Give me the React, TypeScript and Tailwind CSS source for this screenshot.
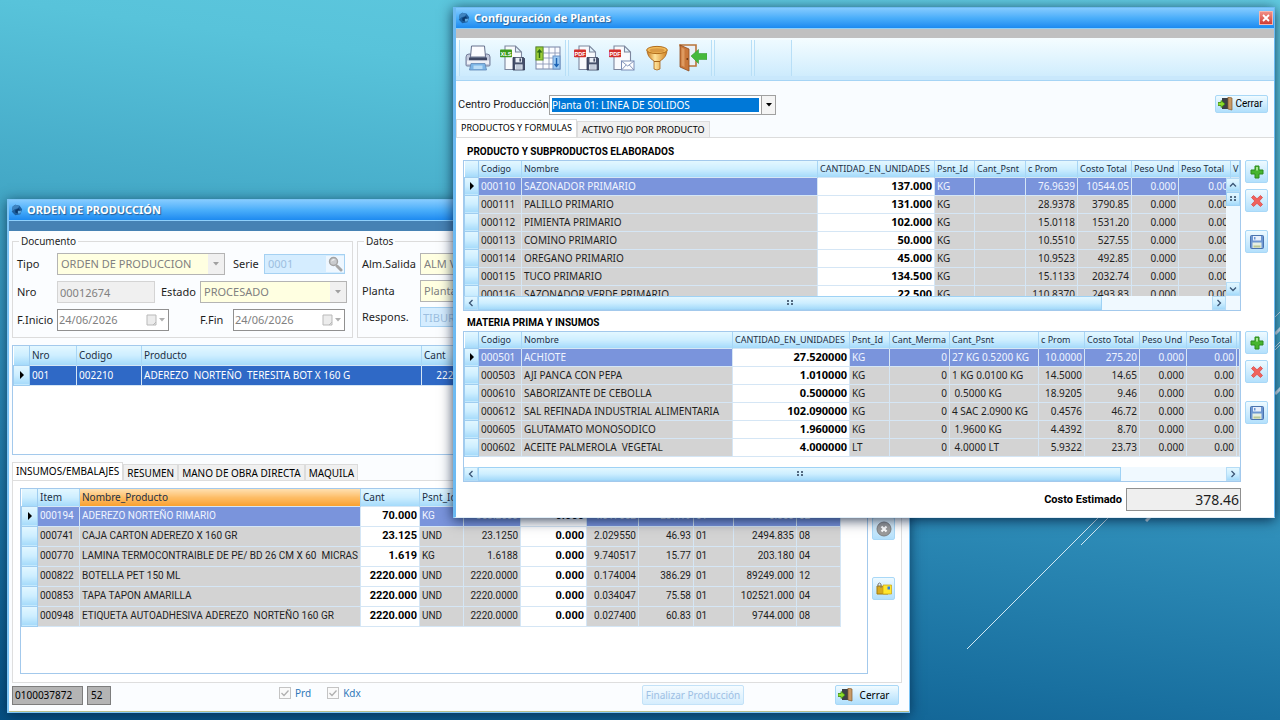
import React, { useState } from 'react';
import clsx from 'clsx';

type Column = {
  title: string;
  width?: string;
  right?: boolean;
  editable?: boolean;
  sorted?: boolean;
};

const font = 'font-["Noto_Sans","Liberation_Sans",sans-serif]';
const narrowFont = 'font-["Roboto","Noto_Sans",sans-serif]';
const glossy = 'bg-linear-to-b from-[#e3f7ff] via-[#cdeeff] to-[#a4dafa]';

const productColumns: Column[] = [
  { title: 'Codigo', width: 'w-[43px]' },
  { title: 'Nombre' },
  { title: 'CANTIDAD_EN_UNIDADES', width: 'w-[117px]', right: true, editable: true },
  { title: 'Psnt_Id', width: 'w-[40px]' },
  { title: 'Cant_Psnt', width: 'w-[51px]' },
  { title: 'c Prom', width: 'w-[52px]', right: true },
  { title: 'Costo Total', width: 'w-[54px]', right: true },
  { title: 'Peso Und', width: 'w-[47px]', right: true },
  { title: 'Peso Total', width: 'w-[52px]', right: true },
  { title: 'V', width: 'w-[9px]' },
];

const productRows = [
  ['000110', 'SAZONADOR PRIMARIO', '137.000', 'KG', '', '76.9639', '10544.05', '0.000', '0.00', ''],
  ['000111', 'PALILLO PRIMARIO', '131.000', 'KG', '', '28.9378', '3790.85', '0.000', '0.00', ''],
  ['000112', 'PIMIENTA PRIMARIO', '102.000', 'KG', '', '15.0118', '1531.20', '0.000', '0.00', ''],
  ['000113', 'COMINO PRIMARIO', '50.000', 'KG', '', '10.5510', '527.55', '0.000', '0.00', ''],
  ['000114', 'OREGANO PRIMARIO', '45.000', 'KG', '', '10.9523', '492.85', '0.000', '0.00', ''],
  ['000115', 'TUCO PRIMARIO', '134.500', 'KG', '', '15.1133', '2032.74', '0.000', '0.00', ''],
  ['000116', 'SAZONADOR VERDE PRIMARIO', '22.500', 'KG', '', '110.8370', '2493.83', '0.000', '0.00', ''],
];

const materialColumns: Column[] = [
  { title: 'Codigo', width: 'w-[43px]' },
  { title: 'Nombre' },
  { title: 'CANTIDAD_EN_UNIDADES', width: 'w-[117px]', right: true, editable: true },
  { title: 'Psnt_Id', width: 'w-[40px]' },
  { title: 'Cant_Merma', width: 'w-[60px]', right: true },
  { title: 'Cant_Psnt', width: 'w-[89px]' },
  { title: 'c Prom', width: 'w-[46px]', right: true },
  { title: 'Costo Total', width: 'w-[55px]', right: true },
  { title: 'Peso Und', width: 'w-[47px]', right: true },
  { title: 'Peso Total', width: 'w-[50px]', right: true },
  { title: '', width: 'w-[3px]' },
];

const materialRows = [
  ['000501', 'ACHIOTE', '27.520000', 'KG', '0', '27 KG 0.5200 KG', '10.0000', '275.20', '0.000', '0.00', ''],
  ['000503', 'AJI PANCA CON PEPA', '1.010000', 'KG', '0', '1 KG 0.0100 KG', '14.5000', '14.65', '0.000', '0.00', ''],
  ['000610', 'SABORIZANTE DE CEBOLLA', '0.500000', 'KG', '0', ' 0.5000 KG', '18.9205', '9.46', '0.000', '0.00', ''],
  ['000612', 'SAL REFINADA INDUSTRIAL ALIMENTARIA', '102.090000', 'KG', '0', '4 SAC 2.0900 KG', '0.4576', '46.72', '0.000', '0.00', ''],
  ['000605', 'GLUTAMATO MONOSODICO', '1.960000', 'KG', '0', ' 1.9600 KG', '4.4392', '8.70', '0.000', '0.00', ''],
  ['000602', 'ACEITE PALMEROLA  VEGETAL', '4.000000', 'LT', '0', ' 4.0000 LT', '5.9322', '23.73', '0.000', '0.00', ''],
];

const orderColumns: Column[] = [
  { title: 'Nro', width: 'w-[47px]' },
  { title: 'Codigo', width: 'w-[65px]' },
  { title: 'Producto', width: 'w-[280px]' },
  { title: 'Cant', width: 'w-[60px]', right: true },
  { title: '' },
];

const orderRows = [['001', '002210', 'ADEREZO  NORTEÑO  TERESITA BOT X 160 G', '2220.000', '']];

const supplyColumns: Column[] = [
  { title: 'Item', width: 'w-[42px]' },
  { title: 'Nombre_Producto', sorted: true },
  { title: 'Cant', width: 'w-[59px]', right: true, editable: true },
  { title: 'Psnt_Id', width: 'w-[44px]' },
  { title: 'Cant_Psnt', width: 'w-[57px]', right: true },
  { title: 'Merma', width: 'w-[66px]', right: true, editable: true },
  { title: 'c Prom', width: 'w-[52px]', right: true },
  { title: 'Costo', width: 'w-[55px]', right: true },
  { title: 'Alm', width: 'w-[40px]' },
  { title: 'Stock', width: 'w-[63px]', right: true },
  { title: 'Lin', width: 'w-[44px]' },
];

const supplyRows = [
  ['000194', 'ADEREZO NORTEÑO RIMARIO', '70.000', 'KG', '353.2500', '0.000', '4.017052', '281.19', '01', '0.360', '02'],
  ['000741', 'CAJA CARTON ADEREZO X 160 GR', '23.125', 'UND', '23.1250', '0.000', '2.029550', '46.93', '01', '2494.835', '08'],
  ['000770', 'LAMINA TERMOCONTRAIBLE DE PE/ BD 26 CM X 60  MICRAS', '1.619', 'KG', '1.6188', '0.000', '9.740517', '15.77', '01', '203.180', '04'],
  ['000822', 'BOTELLA PET 150 ML', '2220.000', 'UND', '2220.0000', '0.000', '0.174004', '386.29', '01', '89249.000', '12'],
  ['000853', 'TAPA TAPON AMARILLA', '2220.000', 'UND', '2220.0000', '0.000', '0.034047', '75.58', '01', '102521.000', '04'],
  ['000948', 'ETIQUETA AUTOADHESIVA ADEREZO  NORTEÑO 160 GR', '2220.000', 'UND', '2220.0000', '0.000', '0.027400', '60.83', '01', '9744.000', '08'],
];

/* ---------- icons ---------- */

const HexLogo = () => (
  <svg viewBox="0 0 14 14" className="h-3 w-3 shrink-0">
    <path d="M5 1 L10 2 L13 6 L11 12 L5 13 L1 9 L2 3Z" fill="#1c5f9f" />
    <path d="M5 1 L10 2 L8 5 L4 6 L1 9 L2 3Z" fill="#3f84c0" />
    <path d="M5 7 L9 5 L11 8 L8 11 L5 10Z" fill="#0b3a6e" />
    <path d="M8 8 L12 8 L11 11 L8 11Z" fill="#5fa9e0" />
  </svg>
);

const Diskette = () => (
  <g>
    <path d="M13 12.5h10.5l1 1V25H13z" fill="#46506b" stroke="#2e3650" strokeWidth=".8" />
    <rect x="15.5" y="12.8" width="6.5" height="4.6" fill="#e9edf5" />
    <rect x="19.4" y="13.4" width="1.7" height="3.2" fill="#46506b" />
    <rect x="15" y="19.4" width="7.6" height="5.2" fill="#dfe6f0" />
    <path d="M16 21h5.6M16 23h5.6" stroke="#9aa6bd" strokeWidth=".8" />
  </g>
);

const Sheet = () => (
  <path d="M5 1h10.5l6 6v17.5H5z M15.5 1v6h6" fill="#f8fafd" stroke="#7d879e" strokeWidth="1.1" />
);

const FileTag = ({ label, color }: { label: string; color: string }) => (
  <g>
    <rect x="0" y="4.6" width="12" height="7.6" rx=".8" fill={color} />
    <text x="6" y="10.6" textAnchor="middle" fontSize="5.6" fontWeight="bold" fill="#fff" fontFamily="Liberation Sans, sans-serif">
      {label}
    </text>
  </g>
);

const PrinterIcon = () => (
  <svg viewBox="0 0 26 26" className="h-[26px] w-[26px]">
    <path d="M6.5 1h13l1 11h-15z" fill="#fbfcff" stroke="#66708c" />
    <path d="M1 12q0-3 3-3h1.5v4h15V9H22q3 0 3 3v8q0 1-1 1H2q-1 0-1-1z" fill="#c2c9dc" stroke="#6a7391" strokeWidth=".9" />
    <path d="M4 12.500h18v3H4z" fill="#3f4763" />
    <path d="M2 15.500h22v3.500H2z" fill="#eef0f7" />
    <path d="M6 18.500h14l1.500 6.500h-17z" fill="#7db5e6" stroke="#5f86b5" strokeWidth=".8" />
    <path d="M8.500 20.500h9v3.500h-9z" fill="#b9dcf7" />
  </svg>
);

const XlsIcon = () => (
  <svg viewBox="0 0 26 26" className="h-[26px] w-[26px]">
    <Sheet />
    <FileTag label="XLS" color="#3c9a1c" />
    <Diskette />
  </svg>
);

const PdfSaveIcon = () => (
  <svg viewBox="0 0 26 26" className="h-[26px] w-[26px]">
    <Sheet />
    <FileTag label="PDF" color="#d3302c" />
    <Diskette />
  </svg>
);

const PdfMailIcon = () => (
  <svg viewBox="0 0 26 26" className="h-[26px] w-[26px]">
    <Sheet />
    <FileTag label="PDF" color="#d3302c" />
    <rect x="12.500" y="16" width="12.500" height="9" fill="#fdfeff" stroke="#7a8db5" />
    <path d="M12.500 16l6.200 5 6.300-5M12.500 25l4.600-5M25 25l-4.600-5" fill="none" stroke="#7a8db5" strokeWidth=".9" />
  </svg>
);

const GridIcon = () => (
  <svg viewBox="0 0 26 26" className="h-[26px] w-[26px]">
    <rect x="1" y="2" width="24" height="22" fill="#fbfcff" stroke="#7784a6" />
    <path d="M8 2v22M14 2v22M20 2v22M1 8h24M1 13h24M1 19h24" stroke="#8d98b8" strokeWidth=".9" />
    <rect x="1" y="2" width="7" height="13" fill="#9bce3a" stroke="#5f9321" />
    <path d="M4.500 13V5M2.500 7.500l2-2.500 2 2.500" fill="none" stroke="#2c6a12" strokeWidth="1.400" />
    <rect x="18" y="11" width="7" height="13" fill="#9cc9f2" stroke="#6c94c8" />
    <path d="M21.500 13v8M19.500 19l2 2.500 2-2.500" fill="none" stroke="#1c62b4" strokeWidth="1.400" />
  </svg>
);

const FunnelIcon = () => (
  <svg viewBox="0 0 26 26" className="h-[26px] w-[26px]">
    <defs>
      <linearGradient id="gold" x1="0" x2="1">
        <stop offset="0" stopColor="#c9791a" />
        <stop offset=".4" stopColor="#ffe39a" />
        <stop offset="1" stopColor="#d0811f" />
      </linearGradient>
    </defs>
    <path d="M3 5q0 7 7 11v8q3 2 6 0v-8q7-4 7-11z" fill="url(#gold)" stroke="#a8651a" strokeWidth=".8" />
    <ellipse cx="13" cy="5" rx="10.300" ry="3.600" fill="#f3bb58" stroke="#b06c1c" />
    <ellipse cx="13" cy="5.400" rx="7.600" ry="2.200" fill="#d99a45" />
    <path d="M10 16.500h6" stroke="#a8651a" />
  </svg>
);

const ExitIcon = () => (
  <svg viewBox="0 0 28 28" className="h-7 w-7">
    <path d="M1 1h16v21H9z" fill="#e9f0f6" stroke="#b9743a" strokeWidth="1.600" />
    <path d="M1 1l9 4v22l-9-4z" fill="#c9773a" stroke="#8f4c1f" strokeWidth=".8" />
    <path d="M2.500 3.500l3 1.400v18l-3-1.300z" fill="#de9a60" />
    <circle cx="8.300" cy="15" r=".9" fill="#6b3512" />
    <path d="M12 12l7.500-6.500V9.500H28v6h-8.500v4z" fill="#45b93b" stroke="#3a9c33" strokeWidth=".6" />
  </svg>
);

const DoorIcon = () => (
  <svg viewBox="0 0 15 14" className="h-3.5 w-[15px] shrink-0">
    <path d="M4 1h7v11H4z" fill="#3c4147" />
    <path d="M10 0l4 1v12l-4-1z" fill="#c89a66" stroke="#85592d" strokeWidth=".7" />
    <path d="M0 5.500h3V3.500L7 7l-4 3.500V8.500H0z" fill="#8ede2a" stroke="#3f8a12" strokeWidth=".8" />
  </svg>
);

const PlusIcon = () => (
  <svg viewBox="0 0 14 14" className="h-3.5 w-3.5">
    <path d="M5 1h4v4h4v4H9v4H5V9H1V5h4z" fill="#46b52e" stroke="#2c8a1d" />
    <path d="M6 2h2v3.500H6z" fill="#a5e58f" />
  </svg>
);

const CrossIcon = () => (
  <svg viewBox="0 0 14 14" className="h-3.5 w-3.5">
    <path d="M3.500 1.500L7 4.800l3.500-3.300 2 2L9.300 7l3.200 3.500-2 2L7 9.300l-3.500 3.200-2-2L4.800 7 1.500 3.500z" fill="#f0625c" stroke="#dc4a48" strokeWidth=".8" />
  </svg>
);

const SaveIcon = () => (
  <svg viewBox="0 0 14 14" className="h-3.5 w-3.5">
    <rect x=".5" y=".5" width="13" height="13" rx="1" fill="#6d97d2" stroke="#4a73ae" />
    <rect x="3" y="1" width="8" height="4.500" fill="#e8f0fb" />
    <rect x="4" y="2" width="1.500" height="2.500" fill="#6d97d2" />
    <rect x="2.500" y="7.500" width="9" height="5.500" fill="#e6efe2" />
    <path d="M3.500 10.500h7v2h-7z" fill="#b9c795" />
  </svg>
);

const MagnifierIcon = () => (
  <svg viewBox="0 0 16 16" className="h-4 w-4">
    <path d="M10 10l4 4" stroke="#a5a5a5" strokeWidth="3" strokeLinecap="round" />
    <circle cx="6.500" cy="5.500" r="4" fill="#c9cbce" stroke="#a3a3a3" strokeWidth="1.400" />
    <path d="M4.500 5q1-1.500 3-1.300" fill="none" stroke="#fff" />
  </svg>
);

const CalendarIcon = () => (
  <svg viewBox="0 0 22 12" className="h-3 w-[22px]">
    <path d="M2 1h9v10H2z" fill="#ececec" stroke="#b9b9b9" />
    <path d="M8 11l3-3" stroke="#b9b9b9" />
    <path d="M14 4h6l-3 3.500z" fill="#b0b0b0" />
  </svg>
);

const Caret = ({ className }: { className: string }) => (
  <svg viewBox="0 0 6 4" className={clsx('h-1 w-1.5', className)}>
    <path d="M0 0h6L3 3.500z" fill="currentColor" />
  </svg>
);

const Chevron = ({ d }: { d: string }) => (
  <svg viewBox="0 0 8 8" className="h-2 w-2">
    <path d={d} fill="none" stroke="#3b5575" strokeWidth="1.300" />
  </svg>
);

const Grip = () => (
  <svg viewBox="0 0 6 6" className="h-1.5 w-1.5">
    <path d="M0 1h2M4 1h2M0 4h2M4 4h2" stroke="#2b3f58" strokeWidth="1.500" />
  </svg>
);

/* ---------- shared pieces ---------- */

const TitleBar = ({ title, children }: { title: string; children?: React.ReactNode }) => (
  <div className="flex h-[21px] items-center gap-1 border-b border-[#8fd0fb] bg-linear-to-b from-[#84cbff] via-[#4aaefa] to-[#1c8af0] pr-px pl-0.5">
    <HexLogo />
    <h1 className="flex-1 truncate text-[11px] leading-4 font-bold text-white [text-shadow:1px_1px_1px_#2a5f95]">{title}</h1>
    {children}
  </div>
);

type GridProps = {
  columns: Column[];
  rows: string[][];
  label: string;
  tall?: boolean;
  strong?: boolean;
  className?: string;
};

const Grid = ({ columns, rows, label, tall, strong, className }: GridProps) => {
  const [selected, setSelected] = useState(0);
  const gutter = tall ? 'w-4' : 'w-[14px]';

  return (
    <table aria-label={label} className={clsx('table-fixed border-collapse text-[10px] leading-3 whitespace-pre', className)}>
      <thead className={tall ? 'text-[10px]' : 'text-[9px]'}>
        <tr className={clsx(strong ? 'h-[19px]' : tall ? 'h-[17px]' : 'h-4')}>
          <th className={clsx(gutter, glossy, 'border-r border-[#9fcdf0]')} />
          {columns.map((col, i) => (
            <th
              key={i}
              className={clsx(
                'overflow-hidden border-r border-[#a8d6f5] p-0 pl-0.5 text-left font-normal text-[#1c2f45]',
                col.width,
                col.sorted ? 'bg-linear-to-b from-[#ffe0b0] via-[#fdbd66] to-[#f9a02c]' : glossy
              )}
            >
              {col.title}
            </th>
          ))}
        </tr>
      </thead>
      <tbody className={clsx(tall && !strong && narrowFont)}>
        {rows.map((row, r) => (
          <tr key={row[0]} className={tall ? 'h-5' : 'h-[18px]'} onClick={() => setSelected(r)}>
            <td className={clsx(glossy, 'border border-[#9fcdf0] p-0')}>
              {r === selected && (
                <svg viewBox="0 0 4 8" className="mx-auto h-2 w-1">
                  <path d="M0 0l4 4-4 4z" fill="#000" />
                </svg>
              )}
            </td>
            {row.map((cell, c) => (
              <td
                key={c}
                className={clsx(
                  'overflow-hidden border border-[#d5e6f5] p-0 px-0.5',
                  columns[c].right && 'text-right',
                  columns[c].editable ? 'bg-white text-[11px] font-bold text-black' : r !== selected && 'bg-[#d3d3d3] text-[#1e1e1e]',
                  !columns[c].editable && r === selected && (strong ? 'bg-[#2f69c6] text-white' : 'bg-[#7a94dc] text-[#f0f4ff]')
                )}
              >
                {cell}
              </td>
            ))}
          </tr>
        ))}
      </tbody>
    </table>
  );
};

const HScroll = ({ thumb, inset }: { thumb: string; inset?: boolean }) => (
  <div className={clsx('flex h-3.5 bg-[#f0f9ff]', inset && 'pr-3.5')}>
    <button aria-label="Izquierda" className={clsx(glossy, 'flex w-3.5 items-center justify-center border border-[#b5dcf6]')}>
      <Chevron d="M5.500 1L2.500 4l3 3" />
    </button>
    <div className="flex flex-1">
      <div className={clsx(glossy, thumb, 'flex items-center justify-center border border-[#9fd2f5]')}>
        <Grip />
      </div>
    </div>
    <button aria-label="Derecha" className={clsx(glossy, 'flex w-3.5 items-center justify-center border border-[#b5dcf6]')}>
      <Chevron d="M2.500 1l3 3-3 3" />
    </button>
  </div>
);

const SideButton = ({ label, children, className }: { label: string; children: React.ReactNode; className?: string }) => (
  <button
    aria-label={label}
    className={clsx(
      'flex h-[23px] w-[23px] items-center justify-center rounded-xs border border-[#a9d8f7] bg-linear-to-b from-[#eefaff] to-[#b3e0fc]',
      className
    )}
  >
    {children}
  </button>
);

const SideButtons = () => (
  <div className="flex flex-col">
    <SideButton label="Agregar"><PlusIcon /></SideButton>
    <SideButton label="Eliminar" className="mt-1.5"><CrossIcon /></SideButton>
    <SideButton label="Guardar" className="mt-[18px]"><SaveIcon /></SideButton>
  </div>
);

const CloseButton = ({ className }: { className?: string }) => (
  <button
    className={clsx(
      'flex items-center rounded-xs border border-[#a9d8f7] bg-linear-to-b from-[#f1fbff] to-[#b0dffc] px-0.5 text-black',
      className
    )}
  >
    <DoorIcon />
    <span className="flex-1 text-center">Cerrar</span>
  </button>
);

const Tabs = ({ items, small }: { items: string[]; small?: boolean }) => {
  const [active, setActive] = useState(0);
  return (
    <div role="tablist" className={clsx('flex items-end leading-3', small ? 'text-[9px]' : 'text-[10px]')}>
      {items.map((item, i) => (
        <button
          key={item}
          role="tab"
          aria-selected={i === active}
          onClick={() => setActive(i)}
          className={clsx(
            'border border-b-0 border-[#dcdcdc] whitespace-nowrap',
            small ? 'px-1' : 'px-[3px]',
            i === active ? 'h-[18px] bg-white pb-0.5' : 'h-4 bg-[#f0f0f0]'
          )}
        >
          {item}
        </button>
      ))}
    </div>
  );
};

const Combo = ({ id, value, className }: { id: string; value: string; className?: string }) => (
  <div className={clsx('flex h-[22px] items-center border border-[#b4b4b4] bg-[#ffffe1] pl-[3px] text-[#808080]', className)}>
    <select id={id} disabled className="min-w-0 flex-1 appearance-none truncate bg-transparent opacity-100">
      <option>{value}</option>
    </select>
    <span className="flex h-full w-4 items-center justify-center bg-[#f0f0f0]">
      <Caret className="text-[#a0a0a0]" />
    </span>
  </div>
);

const DateBox = ({ id, value }: { id: string; value: string }) => (
  <div className="flex h-[22px] w-28 items-center border border-[#909090] bg-white px-px">
    <input id={id} disabled defaultValue={value} className="w-0 min-w-0 flex-1 text-[#808080]" />
    <CalendarIcon />
  </div>
);

const Tick = ({ name }: { name: string }) => (
  <label className="relative flex items-center gap-1">
    <input type="checkbox" disabled defaultChecked className="h-3 w-3 appearance-none border border-[#c4c4c4] bg-[#fafafa]" />
    <svg viewBox="0 0 12 12" className="absolute left-0 h-3 w-3">
      <path d="M2.500 6l2.500 2.500 4.500-5" fill="none" stroke="#b0b0b0" strokeWidth="1.300" />
    </svg>
    {name}
  </label>
);

/* ---------- windows ---------- */

const OrderWindow = () => (
  <section className="absolute top-[199px] right-[370px] left-[7px] border border-l-2 border-[#7cc4f5] bg-[#fbfdff] shadow-[0_2px_12px_rgba(0,30,60,0.7)]">
    <TitleBar title="ORDEN DE PRODUCCIÓN" />
    <div className="h-2.5 bg-[#4682b4]" />

    <div className="flex gap-1 px-[3px] pt-1 text-[11px] leading-4 text-[#1e1e1e]">
      <fieldset className="h-[103px] w-[341px] shrink-0 border border-[#dcdcdc] pl-1">
        <legend className="ml-0.5 px-0.5 text-[10px] leading-3">Documento</legend>
        <div className="flex flex-col gap-1.5 pt-1.5">
          <div className="flex items-center">
            <label htmlFor="tipo" className="w-10">Tipo</label>
            <Combo id="tipo" value="ORDEN DE PRODUCCION" className="w-[168px]" />
            <label htmlFor="serie" className="w-[39px] pl-2">Serie</label>
            <div className="flex h-[20px] w-[81px] items-center border border-[#a5d1f2] bg-[#d5edff] pl-[3px]">
              <input id="serie" disabled defaultValue="0001" className="w-0 min-w-0 flex-1 text-[#9dbfe0]" />
              <button aria-label="Buscar serie" className="bg-[#eef7ff] px-px">
                <MagnifierIcon />
              </button>
            </div>
          </div>
          <div className="flex items-center">
            <label htmlFor="nro" className="w-10">Nro</label>
            <input id="nro" disabled defaultValue="00012674" className="h-[22px] w-[98px] border border-[#d4d4d4] bg-[#f0f0f0] px-0.5 text-[#808080]" />
            <label htmlFor="estado" className="w-[45px] pl-1.5">Estado</label>
            <Combo id="estado" value="PROCESADO" className="w-[147px]" />
          </div>
          <div className="flex items-center">
            <label htmlFor="inicio" className="w-10 whitespace-nowrap">F.Inicio</label>
            <DateBox id="inicio" value="24/06/2026" />
            <label htmlFor="fin" className="w-16 pl-[31px] whitespace-nowrap">F.Fin</label>
            <DateBox id="fin" value="24/06/2026" />
          </div>
        </div>
      </fieldset>
      <fieldset className="h-[103px] min-w-0 flex-1 border border-[#dcdcdc] pl-1">
        <legend className="ml-0.5 px-0.5 text-[10px] leading-3">Datos</legend>
        <div className="flex flex-col gap-[5px] pt-1.5">
          <div className="flex items-center">
            <label htmlFor="almacen" className="w-[58px] whitespace-nowrap">Alm.Salida</label>
            <Combo id="almacen" value="ALM VENTAS" className="w-60" />
          </div>
          <div className="flex items-center">
            <label htmlFor="planta" className="w-[58px]">Planta</label>
            <Combo id="planta" value="Planta 01: LINEA DE SOLIDOS" className="w-60" />
          </div>
          <div className="flex items-center">
            <label htmlFor="respons" className="w-[58px]">Respons.</label>
            <input id="respons" disabled defaultValue="TIBURCIO" className="h-5 w-60 border border-[#a5d1f2] bg-[#d5edff] px-0.5 text-[#9dbfe0]" />
          </div>
        </div>
      </fieldset>
    </div>

    <div className="mx-[3px] mt-[7px] h-[110px] overflow-hidden border border-[#a3c9ec] bg-white">
      <Grid label="Orden" tall strong columns={orderColumns} rows={orderRows} className="w-full" />
    </div>

    <div className="mt-[7px] mr-[7px] ml-[3px]">
      <Tabs items={['INSUMOS/EMBALAJES', 'RESUMEN', 'MANO DE OBRA DIRECTA', 'MAQUILA']} />
      <div className="flex gap-1 border border-[#dedede] bg-white pt-[7px] pr-1.5 pb-2 pl-[7px]">
        <div className="h-[186px] min-w-0 flex-1 overflow-hidden border border-[#a3c9ec] pr-[26px]">
          <Grid label="Insumos y embalajes" tall columns={supplyColumns} rows={supplyRows} className="w-full" />
        </div>
        <div className="flex flex-col pt-[29px]">
          <SideButton label="Anular">
            <svg viewBox="0 0 16 16" className="h-4 w-4">
              <circle cx="8" cy="8" r="7" fill="#9b9b9b" stroke="#808080" />
              <path d="M5.500 5.500l5 5M10.500 5.500l-5 5" stroke="#fff" strokeWidth="2.200" />
            </svg>
          </SideButton>
          <SideButton label="Enviar a carpeta" className="mt-[37px]">
            <svg viewBox="0 0 16 14" className="h-3.5 w-4">
              <path d="M1 4h5l1 1.500h5V12H1z" fill="#d9ab1f" stroke="#a47c0d" />
              <path d="M7 3h8.500v9H7z" fill="#ffe62e" stroke="#c8a010" strokeWidth=".7" />
              <path d="M11.500 4.500h2.500v3h-2.500z" fill="#2f7fe0" />
              <path d="M2 5V2q1.500-2 3 0v4" fill="none" stroke="#7a7a7a" />
            </svg>
          </SideButton>
        </div>
      </div>
    </div>

    <div className="flex h-[29px] items-center border-b border-[#b9bf8a] pr-2.5 pb-1 pl-[3px] text-[10px] leading-3">
      <input aria-label="Documento de referencia" readOnly defaultValue="0100037872" className="h-[19px] w-[71px] border border-[#7d7d7d] bg-[#b4b4b4] px-0.5" />
      <input aria-label="Serie de referencia" readOnly defaultValue="52" className="ml-1 h-[19px] w-6 border border-[#7d7d7d] bg-[#b4b4b4] px-[3px]" />
      <div className="flex flex-1 items-center gap-4 pb-1 pl-[168px] text-[#2f78b8]">
        <Tick name="Prd" />
        <Tick name="Kdx" />
      </div>
      <button disabled className="h-5 w-[102px] rounded-xs border border-[#c3e2f8] bg-linear-to-b from-[#f6fcff] to-[#d5edfd] text-[#9dc0e4]">
        Finalizar Producción
      </button>
      <CloseButton className="ml-[91px] h-5 w-16" />
    </div>
  </section>
);

const toolGroup = 'flex items-center border-x border-[#b8dff7] bg-linear-to-b from-[#eefaff] to-[#cdebfd]';

const PlantWindow = () => (
  <section className="absolute top-[7px] right-[5px] left-[453px] border border-l-[3px] border-[#6dbaf2] border-b-[#e1eef8] bg-white shadow-[0_2px_12px_rgba(0,20,50,0.8)]">
    <TitleBar title="Configuración de Plantas">
      <button aria-label="Cerrar ventana" className="flex h-3.5 w-3.5 items-center justify-center border border-[#f3b7b0] bg-linear-to-b from-[#f08d85] to-[#cf3a35]">
        <svg viewBox="0 0 8 8" className="h-2 w-2">
          <path d="M1 1l6 6M7 1L1 7" stroke="#fff" strokeWidth="1.800" />
        </svg>
      </button>
    </TitleBar>
    <div className="h-[9px] bg-[#c0c0c0]" />

    <div className="bg-linear-to-b from-[#f5fdff] to-[#d0edfd] pt-0.5 pl-[3px]">
      <div className="flex h-9 gap-0.5">
        <div className={clsx(toolGroup, 'w-[107px] justify-around')}>
          <button aria-label="Imprimir"><PrinterIcon /></button>
          <button aria-label="Exportar a XLS"><XlsIcon /></button>
          <button aria-label="Columnas"><GridIcon /></button>
        </div>
        <div className={clsx(toolGroup, 'w-[144px] justify-around')}>
          <button aria-label="Guardar PDF"><PdfSaveIcon /></button>
          <button aria-label="Enviar PDF"><PdfMailIcon /></button>
          <button aria-label="Filtrar"><FunnelIcon /></button>
          <button aria-label="Salir"><ExitIcon /></button>
        </div>
        <div className={clsx(toolGroup, 'w-[38px]')} />
        <div className={clsx(toolGroup, 'w-[38px]')} />
      </div>
    </div>
    <div className="h-[5px] border-b border-[#a6d4f5] bg-[#c9e8fc]" />

    <div className="bg-[#f9fcff] pt-3.5">
      <div className="flex items-center pr-1.5 pl-0.5 text-[#1e1e1e]">
        <label htmlFor="centro" className={clsx(narrowFont, 'w-[91px] text-[11px] leading-4 whitespace-nowrap')}>Centro Producción</label>
        <div className="flex h-[20px] w-[227px] border border-[#a0a0a0] bg-white">
          <select id="centro" className="m-0.5 min-w-0 flex-1 appearance-none bg-[#0078d7] text-[10px] leading-3 text-white">
            <option>Planta 01: LINEA DE SOLIDOS</option>
          </select>
          <span className="flex w-3.5 items-center justify-center border-l border-[#a0a0a0] bg-[#f4f4f4]">
            <Caret className="text-black" />
          </span>
        </div>
        <CloseButton className={clsx(narrowFont, 'mb-0.5 ml-auto h-[18px] w-[53px] text-[10px] leading-3')} />
      </div>
      <div className="pt-1">
        <Tabs small items={['PRODUCTOS Y FORMULAS', 'ACTIVO FIJO POR PRODUCTO']} />
      </div>
    </div>

    <div className="border-t border-[#dcdcdc] pt-2 pr-1.5 pb-1.5 pl-[7px]">
      <h2 className={clsx(narrowFont, 'pl-1 text-[10px] leading-3 font-bold text-black')}>PRODUCTO Y SUBPRODUCTOS ELABORADOS</h2>
      <div className="flex gap-1 pt-0.5">
        <div className="relative min-w-0 flex-1 border border-[#a3c9ec]">
          <div className="h-[135px] overflow-hidden">
            <Grid label="Productos y subproductos" columns={productColumns} rows={productRows} className="w-full" />
          </div>
          {/* vertical bar sits over the last columns */}
          <div className="absolute top-[17px] right-0 flex h-[118px] w-3.5 flex-col bg-[#f0f9ff]">
            <button aria-label="Arriba" className={clsx(glossy, 'flex h-3.5 items-center justify-center border border-[#b5dcf6]')}>
              <Chevron d="M1 5.500l3-3 3 3" />
            </button>
            <div className={clsx(glossy, 'flex h-3.5 items-center justify-center border border-[#9fd2f5]')}>
              <Grip />
            </div>
            <button aria-label="Abajo" className={clsx(glossy, 'mt-auto flex h-3.5 items-center justify-center border border-[#b5dcf6]')}>
              <Chevron d="M1 2.500l3 3 3-3" />
            </button>
          </div>
          <HScroll thumb="w-[85%]" inset />
        </div>
        <SideButtons />
      </div>

      <h2 className={clsx(narrowFont, 'pt-1.5 pl-1 text-[10px] leading-3 font-bold text-black')}>MATERIA PRIMA Y INSUMOS</h2>
      <div className="flex gap-1 pt-0.5">
        <div className="min-w-0 flex-1 border border-[#a3c9ec]">
          <div className="h-[135px] overflow-hidden">
            <Grid label="Materia prima e insumos" columns={materialColumns} rows={materialRows} className="w-full" />
          </div>
          <HScroll thumb="w-[86%]" />
        </div>
        <SideButtons />
      </div>

      <div className="flex items-center justify-end gap-1 pt-1.5 pr-[27px]">
        <label htmlFor="costo" className={clsx(narrowFont, 'text-[11px] leading-4 font-bold')}>Costo Estimado</label>
        <input id="costo" readOnly defaultValue="378.46" className="h-[23px] w-[115px] border border-[#909090] bg-[#efefef] px-px text-right text-sm text-[#1e1e1e]" />
      </div>
    </div>
  </section>
);

const Desktop = () => (
  <svg className="absolute right-0 bottom-0 h-[420px] w-[380px]" viewBox="0 0 380 420" stroke="#d3eaf5">
    <path d="M67 349L207 209M181 245L217 209M375 17L380 12M375 47L380 42M375 50L380 45" fill="none" />
    <path d="M375 34L381 28M375 94L381 88M246 221L250 217" strokeWidth="3" />
  </svg>
);

const App = () => {
  return (
    <main
      className={clsx(
        'relative h-screen min-h-[720px] overflow-hidden bg-[linear-gradient(188deg,#62cce2_0%,#58c3da_20%,#42a6c5_42%,#2f8eb9_60%,#1970a0_80%,#055083_100%)]',
        font
      )}
    >
      <Desktop />
      <OrderWindow />
      <PlantWindow />
    </main>
  );
};

export default App;
